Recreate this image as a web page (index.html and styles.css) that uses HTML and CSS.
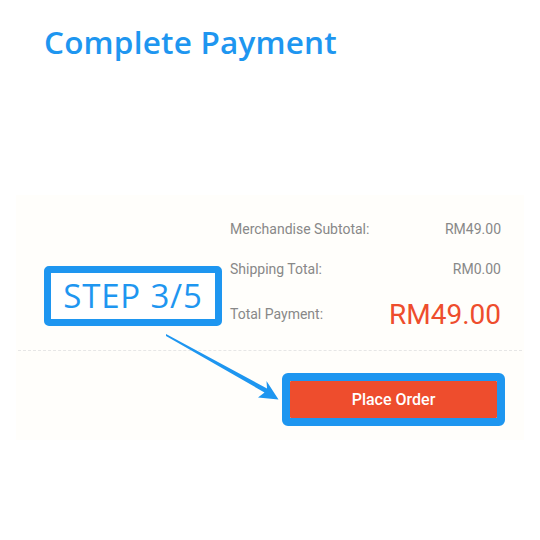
FILE: index.html
```html
<!DOCTYPE html>
<html>
<head>
<meta charset="utf-8">
<link rel="stylesheet" href="styles.css">
</head>
<body>
<div class="page">
  <h1 class="title">Complete Payment</h1>
  <section class="card">
    <div class="summary">
      <div class="row"><span class="label">Merchandise Subtotal:</span><span class="value">RM49.00</span></div>
      <div class="row"><span class="label">Shipping Total:</span><span class="value">RM0.00</span></div>
      <div class="row total"><span class="label">Total Payment:</span><span class="value big">RM49.00</span></div>
    </div>
    <div class="actions">
      <div class="highlight"><button class="order">Place Order</button></div>
    </div>
  </section>
  <div class="step">STEP 3/5</div>
  <svg class="arrow" width="540" height="540" viewBox="0 0 540 540">
    <polygon points="166,334 267,388.5 266.5,381 278.5,399.5 258,397.5 264.5,392.5 166,336" fill="#1e96f0"/>
  </svg>
</div>
</body>
</html>
```
FILE: styles.css
```css
* { box-sizing: border-box; }
html, body { margin: 0; padding: 0; background: #fff; }
body { width: 540px; height: 540px; overflow: hidden; font-family: Roboto, "Liberation Sans", sans-serif; }
.page { position: relative; width: 540px; height: 540px; padding-top: 22px; }
.title {
  margin: 0 0 0 44px;
  font-family: "Open Sans", sans-serif;
  font-weight: 600;
  font-size: 31.5px;
  line-height: 40px;
  color: #1e96f0;
  letter-spacing: 0.2px;
}
.card {
  margin: 133px 16px 0 16px;
  width: 508px;
  background: #fffefb;
  padding-bottom: 14px;
}
.summary {
  padding: 14px 0 11px 0;
  margin: 0 2px;
  border-bottom: 1px dashed #e6e6e6;
}
.row {
  display: flex;
  justify-content: space-between;
  align-items: center;
  height: 40px;
  width: 271px;
  margin-left: auto;
  margin-right: 21px;
}
.row.total { height: 50px; }
.label { font-size: 14px; color: #888; }
.value { font-size: 14px; color: #888; }
.value.big { font-size: 28px; color: #ee4d2d; }
.actions { display: flex; justify-content: flex-end; padding: 22px 19px 0 0; }
.highlight {
  border: 8px solid #1e96f0;
  border-radius: 6px;
  line-height: 0;
}
.order {
  width: 207px;
  height: 37px;
  border: 0;
  margin: 0;
  background: #ee4d2d;
  color: #fff;
  font-family: Roboto, sans-serif;
  font-weight: 500;
  font-size: 16px;
  line-height: 35px;
  border-radius: 1px;
  padding: 0;
}
.step {
  position: absolute;
  left: 44px;
  top: 266px;
  width: 178px;
  height: 60px;
  border: 7px solid #1e96f0;
  border-radius: 5px;
  background: #fff;
  color: #1e96f0;
  font-family: "Open Sans", sans-serif;
  font-size: 33px;
  letter-spacing: 0.8px;
  line-height: 46px;
  text-align: center;
}
.arrow { position: absolute; left: 0; top: 0; pointer-events: none; }
```
